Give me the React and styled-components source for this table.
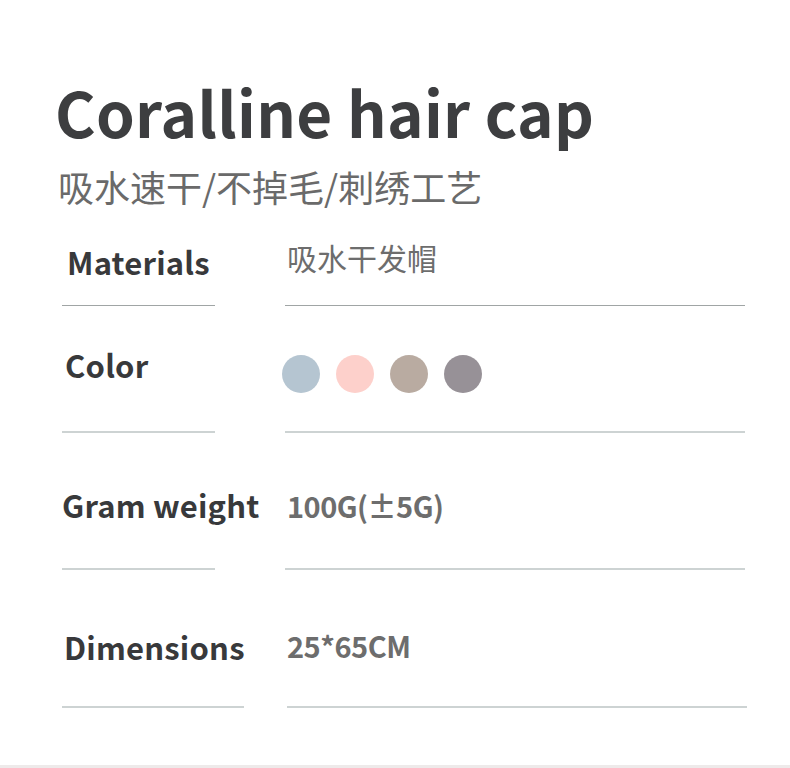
import React from 'react';
import styled, { createGlobalStyle } from 'styled-components';

const GlobalStyle = createGlobalStyle`
  html, body {
    margin: 0;
    padding: 0;
    background: #fff;
  }
  body {
    font-family: "Noto Sans CJK SC", "Noto Sans", sans-serif;
  }
`;

const Page = styled.div`
  width: 790px;
  height: 765px;
  padding: 80px 0 0 55px;
  box-sizing: border-box;
  background: #fff;
`;

const Footer = styled.div`
  width: 790px;
  height: 3px;
  background: #eeeaea;
`;

const Title = styled.h1`
  margin: 0;
  font-size: 62px;
  line-height: 1;
  font-weight: 700;
  letter-spacing: 0.3px;
  color: #3d3e40;
`;

const Subtitle = styled.p`
  margin: 26px 0 0 3px;
  font-size: 36px;
  line-height: 1;
  font-weight: 400;
  color: #6a6a6a;
`;

const Row = styled.div`
  display: grid;
  grid-template-columns: ${p => p.$labelWidth}px 460px;
  column-gap: ${p => p.$gap}px;
  margin-left: 7px;
  height: ${p => p.$height}px;
`;

const Cell = styled.div`
  box-sizing: border-box;
  padding-top: ${p => p.$top}px;
  padding-left: ${p => p.$inset || 0}px;
  border-bottom: ${p => (p.$dark ? '1px solid #a0a5a5' : '2px solid #cdd3d3')};
`;

const Label = styled.div`
  font-size: 31px;
  line-height: 1;
  font-weight: 700;
  letter-spacing: 0.2px;
  color: #38393b;
  white-space: nowrap;
`;

const Value = styled.div`
  font-size: ${p => (p.$bold ? 29 : 30)}px;
  line-height: 1;
  font-weight: ${p => (p.$bold ? 700 : 400)};
  letter-spacing: ${p => (p.$bold ? '-0.5px' : '0')};
  color: #6d6d6d;
  white-space: nowrap;
`;

const Swatches = styled.div`
  display: flex;
  gap: 16px;
  margin-left: -3px;
`;

const Swatch = styled.span`
  width: 38px;
  height: 38px;
  border-radius: 50%;
  background: ${p => p.$color};
`;

const swatchColors = ['#b5c5d1', '#fdd0cb', '#b9aba1', '#979197'];

export default function App() {
  return (
    <>
      <GlobalStyle />
      <Page>
        <Title>Coralline hair cap</Title>
        <Subtitle>吸水速干/不掉毛/刺绣工艺</Subtitle>

        <Row $labelWidth={153} $gap={70} $height={102}>
          <Cell $top={42} $inset={5} $dark>
            <Label>Materials</Label>
          </Cell>
          <Cell $top={38} $inset={2} $dark>
            <Value>吸水干发帽</Value>
          </Cell>
        </Row>

        <Row $labelWidth={153} $gap={70} $height={127}>
          <Cell $top={43} $inset={3}>
            <Label>Color</Label>
          </Cell>
          <Cell $top={49}>
            <Swatches>
              {swatchColors.map(c => (
                <Swatch key={c} $color={c} />
              ))}
            </Swatches>
          </Cell>
        </Row>

        <Row $labelWidth={153} $gap={70} $height={137}>
          <Cell $top={56} $inset={0}>
            <Label>Gram weight</Label>
          </Cell>
          <Cell $top={58} $inset={2}>
            <Value $bold>100G(±5G)</Value>
          </Cell>
        </Row>

        <Row $labelWidth={182} $gap={43} $height={138}>
          <Cell $top={61} $inset={2}>
            <Label>Dimensions</Label>
          </Cell>
          <Cell $top={61} $inset={-2}>
            <Value $bold>25*65CM</Value>
          </Cell>
        </Row>
      </Page>
      <Footer />
    </>
  );
}
